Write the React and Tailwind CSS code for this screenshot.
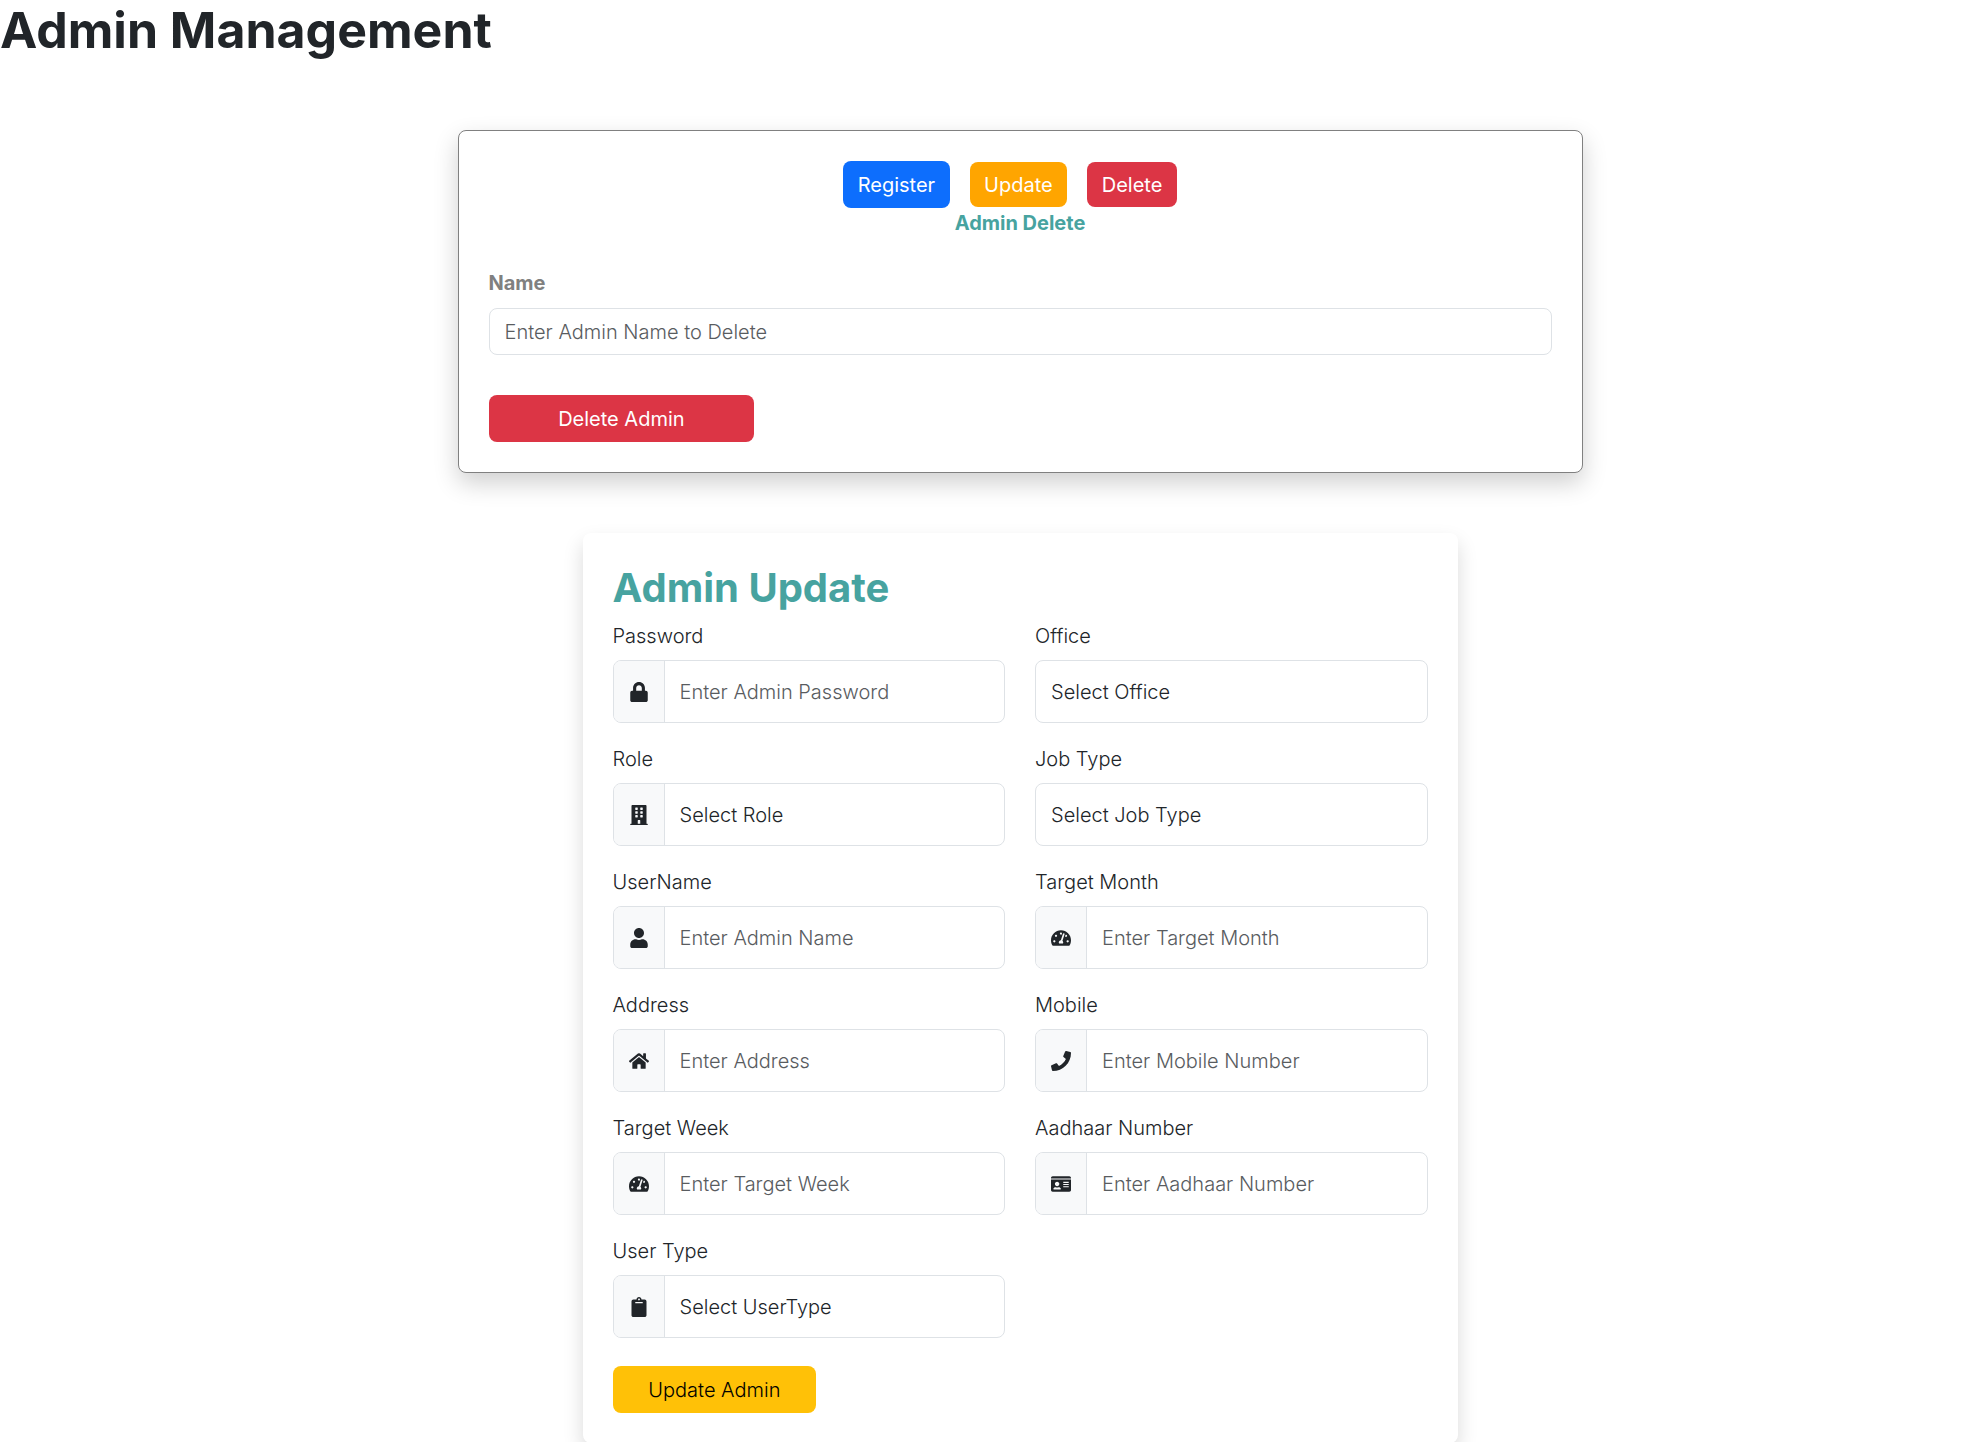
import React from "react";
import {
  FaLock,
  FaBuilding,
  FaUser,
  FaHome,
  FaPhone,
  FaIdCard,
  FaClipboard,
  FaTachometerAlt,
} from "react-icons/fa";

const fields = [
  { id: "password", label: "Password", icon: FaLock, text: "Enter Admin Password", type: "password" },
  { id: "office", label: "Office", text: "Select Office", select: true },
  { id: "role", label: "Role", icon: FaBuilding, text: "Select Role", select: true },
  { id: "job-type", label: "Job Type", text: "Select Job Type", select: true },
  { id: "username", label: "UserName", icon: FaUser, text: "Enter Admin Name" },
  { id: "target-month", label: "Target Month", icon: FaTachometerAlt, text: "Enter Target Month" },
  { id: "address", label: "Address", icon: FaHome, text: "Enter Address" },
  { id: "mobile", label: "Mobile", icon: FaPhone, text: "Enter Mobile Number" },
  { id: "target-week", label: "Target Week", icon: FaTachometerAlt, text: "Enter Target Week" },
  { id: "aadhaar", label: "Aadhaar Number", icon: FaIdCard, text: "Enter Aadhaar Number" },
  { id: "user-type", label: "User Type", icon: FaClipboard, text: "Select UserType", select: true },
];

function Field({ id, label, icon: Icon, text, select, type = "text" }) {
  return (
    <div className="flex flex-col gap-2">
      <label htmlFor={id} className="leading-8">
        {label}
      </label>
      <div className="flex h-[63px] overflow-hidden rounded-lg border border-[#dee2e6] bg-white">
        {Icon && (
          <span className="flex w-[51px] shrink-0 items-center justify-center border-r border-[#dee2e6] bg-[#f8f9fa]">
            <Icon size={20} aria-hidden="true" />
          </span>
        )}
        {select ? (
          <select id={id} className="min-w-0 flex-1 appearance-none bg-transparent px-[15px] outline-none">
            <option>{text}</option>
          </select>
        ) : (
          <input
            id={id}
            type={type}
            placeholder={text}
            className="min-w-0 flex-1 bg-transparent px-[15px] outline-none placeholder:text-[#595c5f]"
          />
        )}
      </div>
    </div>
  );
}

export default function App() {
  return (
    <div className="bg-white font-[Inter,sans-serif] text-[20px] leading-8 font-light text-[#212529]">
      <h1 className="text-[50px] leading-[60px] font-bold">Admin Management</h1>

      <main className="flex flex-col items-center gap-[60px] pt-[70px] pl-[60px]">
        <section className="w-full max-w-[1125px] rounded-lg border border-[#808080] bg-white p-[30px] shadow-[0_10px_24px_rgba(0,0,0,0.19)]">
          <div className="flex items-center justify-center">
            <button type="button" className="mr-5 h-[47px] rounded-lg bg-[#0d6efd] px-[15px] font-normal text-white">
              Register
            </button>
            <button type="button" className="mr-5 h-[45px] rounded-lg bg-[#ffa500] px-3.5 font-normal text-white">
              Update
            </button>
            <button type="button" className="mr-5 h-[45px] rounded-lg bg-[#dc3545] px-[15px] font-normal text-white">
              Delete
            </button>
          </div>
          <h2 className="text-center leading-[30px] font-bold text-[#47a3a0]">Admin Delete</h2>
          <form className="flex flex-col items-start pt-[30px]">
            <label htmlFor="delete-name" className="leading-[30px] font-bold text-[#808080]">
              Name
            </label>
            <input
              id="delete-name"
              type="text"
              placeholder="Enter Admin Name to Delete"
              className="mt-2.5 h-[47px] w-full rounded-lg border border-[#dee2e6] px-[15px] outline-none placeholder:text-[#595c5f]"
            />
            <button type="button" className="mt-10 h-[47px] w-1/4 rounded-lg bg-[#dc3545] font-normal text-white">
              Delete Admin
            </button>
          </form>
        </section>

        <section className="w-full max-w-[875px] rounded-lg bg-white p-[30px] shadow-[0_10px_20px_rgba(0,0,0,0.15)]">
          <h2 className="text-[40px] leading-[49px] font-bold text-[#47a3a0]">Admin Update</h2>
          <form className="pt-2">
            <div className="grid grid-cols-2 gap-x-[30px] gap-y-5">
              {fields.map((field) => (
                <Field key={field.id} {...field} />
              ))}
            </div>
            <button type="button" className="mt-7 h-[47px] w-1/4 rounded-lg bg-[#ffc107] text-black">
              Update Admin
            </button>
          </form>
        </section>
      </main>
    </div>
  );
}
